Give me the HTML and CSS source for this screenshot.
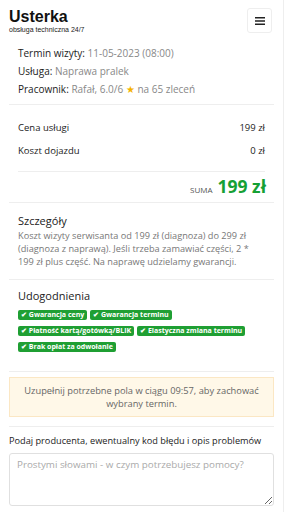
FILE: index.html
```html
<!DOCTYPE html>
<html lang="pl">
<head>
    <meta charset="UTF-8">
    <meta name="viewport" content="width=device-width, initial-scale=1.0">
    <title>Usterka</title>
    <link rel="stylesheet" href="styles.css">
</head>
<body>
<div class="page">
    <!-- Header -->
    <div class="header">
        <div class="brand">
            <div class="logo">Usterka</div>
            <div class="tagline">obsługa techniczna 24/7</div>
        </div>
        <button class="menu-btn" aria-label="menu">
            <svg width="10" height="8" viewBox="0 0 10 8"><path d="M0 0.75h10M0 4h10M0 7.25h10" stroke="#222" stroke-width="1.3"/></svg>
        </button>
    </div>

    <!-- Summary -->
    <div class="section summary">
        <div class="info">
            <p><span class="lbl">Termin wizyty:</span> <span class="val">11-05-2023 (08:00)</span></p>
            <p><span class="lbl">Usługa:</span> <span class="val">Naprawa pralek</span></p>
            <p><span class="lbl">Pracownik:</span> <span class="val">Rafał, 6.0/6 <span class="star">★</span> na 65 zleceń</span></p>
        </div>
        <div class="costs">
            <div class="row"><span>Cena usługi</span><span>199 zł</span></div>
            <div class="row"><span>Koszt dojazdu</span><span>0 zł</span></div>
        </div>
        <div class="total"><span class="suma">SUMA</span><span class="sum-val">199 zł</span></div>
    </div>

    <!-- Details -->
    <div class="section">
        <div class="block details">
            <h3>Szczegóły</h3>
            <p>Koszt wizyty serwisanta od 199 zł (diagnoza) do 299 zł (diagnoza z naprawą). Jeśli trzeba zamawiać części, 2 * 199 zł plus część. Na naprawę udzielamy gwarancji.</p>
        </div>
        <div class="block perks">
            <h3>Udogodnienia</h3>
            <div class="badges">
                <span class="badge">✔ Gwarancja ceny</span>
                <span class="badge">✔ Gwarancja terminu</span>
                <span class="badge">✔ Płatność kartą/gotówką/BLIK</span>
                <span class="badge">✔ Elastyczna zmiana terminu</span>
                <span class="badge">✔ Brak opłat za odwołanie</span>
            </div>
        </div>
    </div>

    <!-- Notice -->
    <div class="notice-wrap">
        <div class="notice">Uzupełnij potrzebne pola w ciągu 09:57, aby zachować wybrany termin.</div>
    </div>

    <!-- Form -->
    <div class="form">
        <label for="desc">Podaj producenta, ewentualny kod błędu i opis problemów</label>
        <textarea id="desc" placeholder="Prostymi słowami - w czym potrzebujesz pomocy?"></textarea>
    </div>
</div>
</body>
</html>
```

FILE: styles.css
```css
body {
    margin: 0;
    padding: 0;
    background: white;
    font-family: 'Open Sans', sans-serif;
    color: #222;
    overflow: hidden;
}

.page {
    width: 283px;
    height: 512px;
    border-right: 1px solid #eee;
    box-sizing: content-box;
}

/* Header */
.header {
    display: flex;
    justify-content: space-between;
    align-items: flex-start;
    height: 33px;
    padding: 8px 11px 0 9px;
    box-sizing: border-box;
}

.logo {
    font-family: 'Liberation Sans', sans-serif;
    font-size: 16px;
    font-weight: bold;
    line-height: 18px;
    color: #111;
}

.tagline {
    font-family: 'Liberation Sans', sans-serif;
    font-size: 7px;
    line-height: 8px;
    color: #222;
}

.menu-btn {
    width: 25px;
    height: 25px;
    display: flex;
    align-items: center;
    justify-content: center;
    background: white;
    border: 1px solid #eee;
    border-radius: 3px;
    padding: 0;
}

/* Summary */
.section {
    margin: 0 9px;
    border-bottom: 1px solid #eee;
}

.summary .info {
    padding: 11px 9px 6px;
    border-bottom: 1px solid #eee;
}

.info p {
    margin: 0;
    font-size: 10px;
    line-height: 18px;
}

.info .val {
    color: #888;
}

.star {
    color: #f5b301;
}

.costs {
    margin: 0 9px;
    padding: 11px 0 9px;
    border-bottom: 1px solid #eee;
}

.costs .row {
    display: flex;
    justify-content: space-between;
    font-size: 9.5px;
    line-height: 23px;
}

.total {
    display: flex;
    justify-content: flex-end;
    align-items: baseline;
    gap: 5px;
    padding: 4px 8px 6px;
}

.suma {
    font-size: 8px;
    color: #555;
}

.sum-val {
    font-size: 17.5px;
    font-weight: bold;
    color: #16a034;
    line-height: 20px;
}

/* Details */
.block {
    padding: 10px 9px 11px;
}

.details {
    border-bottom: 1px solid #eee;
}

.perks {
    padding-top: 8px;
}

.block h3 {
    margin: 0;
    font-size: 11px;
    font-weight: normal;
    line-height: 16px;
}

.details p {
    margin: 0;
    font-size: 9.2px;
    line-height: 13px;
    color: #777;
}

.badges {
    display: flex;
    flex-wrap: wrap;
    gap: 6px 3px;
    padding-top: 6px;
    padding-bottom: 8px;
}

.badge {
    background: #1f9f33;
    color: white;
    font-size: 7px;
    font-weight: bold;
    line-height: 10px;
    padding: 0 3px;
    border-radius: 2px;
}

/* Notice */
.notice-wrap {
    margin: 0 9px;
    padding: 5px 0 9px;
    border-bottom: 1px solid #eee;
}

.notice {
    background: #fff8e8;
    border: 1px solid #fbe7c4;
    color: #666;
    font-size: 9.3px;
    line-height: 13px;
    text-align: center;
    padding: 6px 10px;
}

/* Form */
.form {
    padding: 8px 9px 0;
}

.form label {
    display: block;
    font-size: 9.2px;
    line-height: 12px;
    margin-bottom: 6px;
}

.form textarea {
    display: block;
    width: 100%;
    height: 53px;
    box-sizing: border-box;
    border: 1px solid #e0e0e0;
    border-radius: 3px;
    padding: 4px 7px;
    font-family: 'Open Sans', sans-serif;
    font-size: 9.8px;
    resize: vertical;
}

.form textarea::placeholder {
    color: #aaa;
}
```
